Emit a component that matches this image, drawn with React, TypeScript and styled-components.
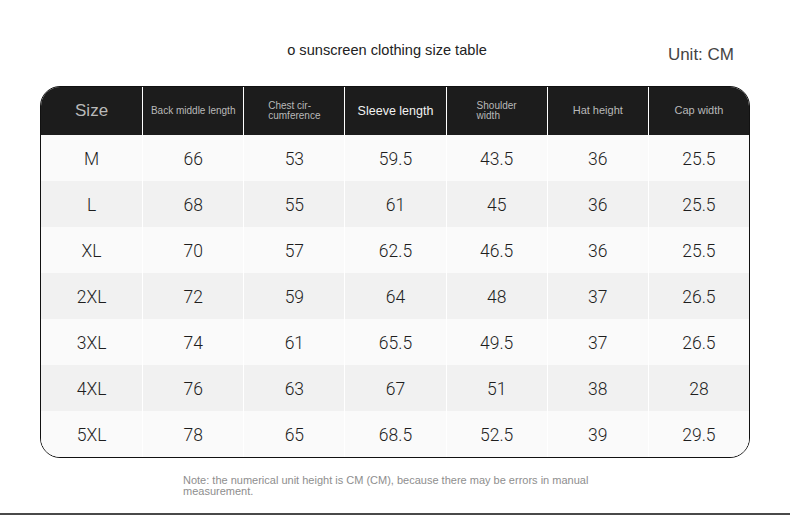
import React from 'react';
import styled, { createGlobalStyle } from 'styled-components';

const GlobalStyle = createGlobalStyle`
  html, body {
    margin: 0;
    padding: 0;
    background: #ffffff;
    font-family: "Liberation Sans", Arial, sans-serif;
  }
`;

const Page = styled.div`
  width: 790px;
  height: 516px;
  display: flex;
  flex-direction: column;
  box-sizing: border-box;
  overflow: hidden;
`;

const TopBar = styled.div`
  display: grid;
  grid-template-columns: 1fr auto 1fr;
  align-items: center;
  padding: 40px 16px 0 0;
  height: 26px;
`;

const Title = styled.h1`
  grid-column: 2;
  margin: 0;
  font-size: 14.6px;
  font-weight: 400;
  color: #222;
  position: relative;
  top: -3px;
`;

const Unit = styled.span`
  grid-column: 3;
  justify-self: end;
  margin-right: 40px;
  font-size: 17px;
  color: #444;
  position: relative;
  top: 2px;
`;

const Table = styled.div`
  margin: 20px 40px 0;
  width: 710px;
  box-sizing: border-box;
  border: 1px solid #111;
  border-radius: 20px;
  overflow: hidden;
  background: #fafafa;
`;

const Row = styled.div<{ $shade?: boolean }>`
  display: grid;
  grid-template-columns: repeat(7, 1fr);
  height: 46px;
  background: ${p => (p.$shade ? '#f1f1f1' : '#fafafa')};
`;

const HeadRow = styled.div`
  display: grid;
  grid-template-columns: repeat(7, 1fr);
  height: 48px;
  background: #1c1c1c;
`;

const HeadCell = styled.div<{ $size?: number; $bright?: boolean }>`
  display: flex;
  align-items: center;
  justify-content: center;
  font-size: ${p => p.$size || 10}px;
  line-height: ${p => (p.$size || 10) + 0.5}px;
  color: ${p => (p.$bright ? '#f2f2f2' : '#b9b9b9')};
  white-space: pre-line;
  text-align: left;

  &:not(:first-child) {
    border-left: 1px solid #ffffff;
  }
`;

const Cell = styled.div`
  display: flex;
  align-items: center;
  justify-content: center;
  font-family: Roboto, "Liberation Sans", sans-serif;
  font-weight: 300;
  font-size: 17.5px;
  color: #1e1e1e;
  padding-top: 2px;

  &:not(:first-child) {
    border-left: 1px solid #ffffff;
  }
`;

const Note = styled.p`
  margin: 17px 0 0 183px;
  width: 440px;
  font-size: 11px;
  line-height: 11px;
  color: #8e8e8e;
`;

const BottomLine = styled.div`
  margin-top: auto;
  margin-bottom: 1px;
  height: 2px;
  background: #4a4a4a;
`;

const headers: { label: string; size?: number; bright?: boolean }[] = [
  { label: 'Size', size: 17 },
  { label: 'Back middle length', size: 10 },
  { label: 'Chest cir-\ncumference', size: 10 },
  { label: 'Sleeve length', size: 12.5, bright: true },
  { label: 'Shoulder\nwidth', size: 10 },
  { label: 'Hat height', size: 11 },
  { label: 'Cap width', size: 11 },
];

const rows = [
  ['M', '66', '53', '59.5', '43.5', '36', '25.5'],
  ['L', '68', '55', '61', '45', '36', '25.5'],
  ['XL', '70', '57', '62.5', '46.5', '36', '25.5'],
  ['2XL', '72', '59', '64', '48', '37', '26.5'],
  ['3XL', '74', '61', '65.5', '49.5', '37', '26.5'],
  ['4XL', '76', '63', '67', '51', '38', '28'],
  ['5XL', '78', '65', '68.5', '52.5', '39', '29.5'],
];

const App = () => {
  return (
    <Page>
      <GlobalStyle />
      <TopBar>
        <Title>o sunscreen clothing size table</Title>
        <Unit>Unit: CM</Unit>
      </TopBar>
      <Table>
        <HeadRow>
          {headers.map(h => (
            <HeadCell key={h.label} $size={h.size} $bright={h.bright}>
              {h.label}
            </HeadCell>
          ))}
        </HeadRow>
        {rows.map((r, i) => (
          <Row key={r[0]} $shade={i % 2 === 1}>
            {r.map((v, j) => (
              <Cell key={j}>{v}</Cell>
            ))}
          </Row>
        ))}
      </Table>
      <Note>
        Note: the numerical unit height is CM (CM), because there may be errors in manual measurement.
      </Note>
      <BottomLine />
    </Page>
  );
};

export default App;
